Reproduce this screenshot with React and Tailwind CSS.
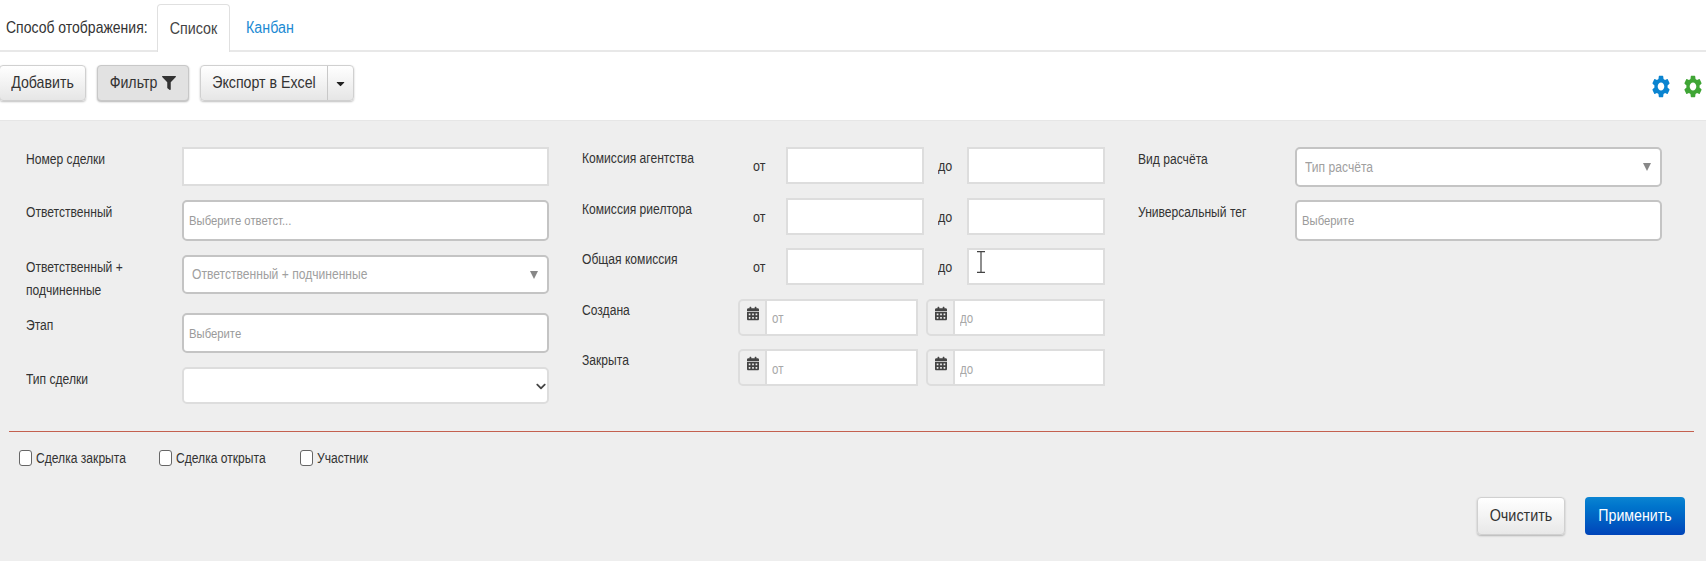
import React from 'react'
import { FaFilter, FaCaretDown, FaCalendarAlt, FaChevronDown } from 'react-icons/fa';
import { MdSettings } from 'react-icons/md';

// the text in the screenshot is narrow and tall, so it is stretched a little
const tall = 'inline-block scale-y-[1.2]';
const tallBtn = 'inline-block scale-y-[1.15]';
const labelText = 'text-[12.1px] leading-[19px] text-[#333] origin-top-left scale-y-[1.2] shrink-0';

const plainInput = 'w-full h-full bg-white border-2 border-[#dddddd] outline-none';
const toolBtn = 'h-[36px] flex items-center border border-[#d0d0d0] rounded-[4px] bg-gradient-to-b from-white to-[#e6e6e6] shadow-[0_1px_2px_rgba(0,0,0,0.25)] text-[14.2px] text-[#333]';

const FormRow = ({ label, className, children }) => (
  <div className={`flex ${className}`}>
    <div className={`w-[156px] pt-[1px] ${labelText}`}>{label}</div>
    <div className="flex-1 relative">{children}</div>
  </div>
)

const ComboBox = ({ text }) => (
  <div className="w-full h-full bg-white border-2 border-[#c4c4c4] rounded-[5px] flex items-center justify-between pl-[8px] pr-[9px] text-[12.1px] text-[#a0a0a0]">
    <span className={tall}>{text}</span>
    <svg width="8" height="8" viewBox="0 0 8 8" fill="#888"><path d="M0 0h8L4 8z" /></svg>
  </div>
)

const TagBox = ({ text }) => (
  <div className="w-full h-full bg-white border-2 border-[#c4c4c4] rounded-[5px] flex items-center pl-[5px] text-[11.3px] text-[#9a9a9a]">
    <span className={tall}>{text}</span>
  </div>
)

const Prefix = ({ children, className }) => (
  <div className={`pt-[8px] text-[12.5px] leading-[23px] text-[#333] shrink-0 ${className}`}>
    <span className={tall}>{children}</span>
  </div>
)

const RangeRow = ({ label, cursor }) => (
  <div className="flex h-[37px]">
    <div className={`w-[156px] ${labelText}`}>{label}</div>
    <Prefix className="w-[48px] pl-[15px]">от</Prefix>
    <input className={`${plainInput} !w-[138px] shrink-0`} />
    <Prefix className="w-[43px] pl-[14px]">до</Prefix>
    <div className="flex-1 relative">
      <input className={plainInput} />
      {cursor && (
        <svg className="absolute left-[10px] top-[3px]" width="8" height="22" viewBox="0 0 8 22" fill="none" stroke="#444" strokeWidth="1.2">
          <path d="M0 .6h8M0 21.4h8M4 .6v20.8" />
        </svg>
      )}
    </div>
  </div>
)

const DateBox = ({ text, className }) => (
  <div className={`flex h-full border-2 border-[#dddddd] rounded-l-[5px] bg-[#eeeeee] ${className}`}>
    <div className="w-[27px] flex justify-center pt-[5px] shrink-0 border-r-2 border-[#dddddd]">
      <FaCalendarAlt className="w-[12px] h-[15px] text-[#444]" />
    </div>
    <div className="flex-1 min-w-0 bg-white pl-[5px] flex items-center text-[11.5px] text-[#a8a8a8]">
      <span className={`${tall} mt-[3px]`}>{text}</span>
    </div>
  </div>
)

const DateRow = ({ label }) => (
  <div className="flex h-[37px]">
    <div className={`w-[156px] ${labelText}`}>{label}</div>
    <DateBox text="от" className="w-[180px] shrink-0 mr-[8px]" />
    <DateBox text="до" className="flex-1 min-w-0" />
  </div>
)

const Check = ({ label, className }) => (
  <label className={`flex items-center gap-[4px] text-[12.1px] text-[#333] ${className}`}>
    <input type="checkbox" className="appearance-none w-[13px] h-[16px] bg-white border border-[#666] rounded-[3px]" />
    <span className={tall}>{label}</span>
  </label>
)

const App = () => {
  return (
    <div className="w-[1706px] h-[564px] overflow-hidden bg-white font-['Liberation_Sans',Arial,sans-serif]">

      <div className="h-[52px] flex items-end pl-[6px] border-b-2 border-[#e8e8e8]">
        <div className="w-[151px] h-[46px] pt-[13px] text-[14px] text-[#333] leading-[20px]">
          <span className={tallBtn}>Способ отображения:</span>
        </div>
        <div className="w-[73px] h-[48px] -mb-[2px] flex items-center justify-center border border-b-0 border-[#e0e0e0] rounded-t-[4px] bg-white text-[14.3px] text-[#444]">
          <span className={tallBtn}>Список</span>
        </div>
        <a className="h-[48px] ml-[16px] pt-[4px] flex items-center text-[14.3px] text-[#1b8ad3]">
          <span className={tallBtn}>Канбан</span>
        </a>
      </div>

      <div className="h-[68px] flex items-start pt-[13px]">
        <button className={`${toolBtn} w-[87px] -ml-[1px] justify-center`}>
          <span className={tallBtn}>Добавить</span>
        </button>
        <button className="h-[36px] w-[92px] ml-[11px] flex items-center justify-center gap-[5px] border border-[#c8c8c8] rounded-[4px] bg-[#e2e2e2] shadow-[0_1px_2px_rgba(0,0,0,0.3)] text-[14.2px] text-[#333]">
          <span className={tallBtn}>Фильтр</span> <FaFilter className="w-[14px] h-[16px] text-[#333]" />
        </button>
        <div className={`${toolBtn} w-[154px] ml-[11px]`}>
          <span className="w-[127px] h-full flex items-center justify-center border-r border-[#c8c8c8]">
            <span className={tallBtn}>Экспорт в Excel</span>
          </span>
          <span className="flex-1 flex justify-center"><FaCaretDown className="w-[13px] h-[13px] text-[#222]" /></span>
        </div>
        <div className="ml-auto mr-[2px] mt-[8px] flex items-center gap-[10px]">
          <MdSettings preserveAspectRatio="none" className="w-[22px] h-[27px] text-[#0a84d0]" />
          <MdSettings preserveAspectRatio="none" className="w-[22px] h-[27px] text-[#3fa535]" />
        </div>
      </div>

      <div className="h-[441px] bg-[#eeeeee] border-t border-[#e6e6e6] px-[9px] pt-[26px]">
        <div className="h-[283px] pl-[17px] flex">

          <div className="w-[523px] mr-[33px] flex flex-col">
            <FormRow label="Номер сделки" className="h-[39px] mb-[14px]">
              <input className={plainInput} />
            </FormRow>
            <FormRow label="Ответственный" className="h-[41px] mb-[14px]">
              <TagBox text="Выберите ответст..." />
            </FormRow>
            <FormRow label={<>Ответственный +<br />подчиненные</>} className="h-[39px] mb-[19px]">
              <ComboBox text="Ответственный + подчиненные" />
            </FormRow>
            <FormRow label="Этап" className="h-[40px] mb-[14px]">
              <TagBox text="Выберите" />
            </FormRow>
            <FormRow label="Тип сделки" className="h-[37px]">
              <select className="w-full h-full appearance-none bg-white border-2 border-[#dddddd] rounded-[5px] outline-none" />
              <FaChevronDown className="absolute right-[3px] top-[14px] w-[10px] h-[11px] text-[#444]" />
            </FormRow>
          </div>

          <div className="w-[523px] mr-[33px] flex flex-col gap-[13.6px]">
            <RangeRow label="Комиссия агентства" />
            <RangeRow label="Комиссия риелтора" />
            <RangeRow label="Общая комиссия" cursor />
            <DateRow label="Создана" />
            <DateRow label="Закрыта" />
          </div>

          <div className="w-[524px] flex flex-col">
            <div className="flex h-[40px] mb-[13px]">
              <div className={`w-[157px] pt-[1px] ${labelText}`}>Вид расчёта</div>
              <div className="flex-1"><ComboBox text="Тип расчёта" /></div>
            </div>
            <div className="flex h-[41px]">
              <div className={`w-[157px] pt-[1px] ${labelText}`}>Универсальный тег</div>
              <div className="flex-1"><TagBox text="Выберите" /></div>
            </div>
          </div>

        </div>

        <div className="mt-[1px] mr-[3px] h-[1px] bg-[#c4604f]"></div>

        <div className="mt-[18px] pl-[10px] flex h-[16px]">
          <Check label="Сделка закрыта" className="w-[140px]" />
          <Check label="Сделка открыта" className="w-[141px]" />
          <Check label="Участник" />
        </div>

        <div className="mt-[31px] pr-[12px] flex justify-end gap-[20px]">
          <button className="w-[88px] h-[38px] border border-[#d0d0d0] rounded-[4px] bg-gradient-to-b from-white to-[#e8e8e8] shadow-[0_1px_2px_rgba(0,0,0,0.25)] text-[14.4px] text-[#333]">
            <span className={tallBtn}>Очистить</span>
          </button>
          <button className="w-[100px] h-[38px] rounded-[4px] bg-gradient-to-b from-[#0b84d2] to-[#0044b9] text-[14.2px] text-white">
            <span className={tallBtn}>Применить</span>
          </button>
        </div>
      </div>

    </div>
  )
}

export default App
